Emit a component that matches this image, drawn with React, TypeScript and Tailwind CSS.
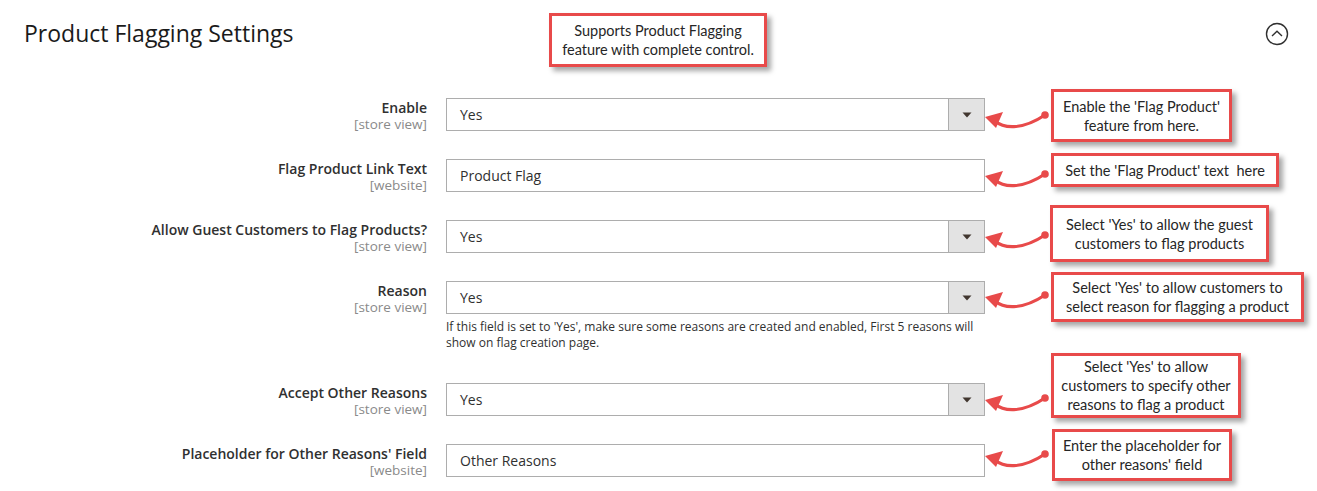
import React from "react";

type Row = {
  label: string;
  scope: string;
  value: string;
  select: boolean;
  note?: string[];
};

const rows: Row[] = [
  { label: "Enable", scope: "[store view]", value: "Yes", select: true },
  { label: "Flag Product Link Text", scope: "[website]", value: "Product Flag", select: false },
  { label: "Allow Guest Customers to Flag Products?", scope: "[store view]", value: "Yes", select: true },
  {
    label: "Reason",
    scope: "[store view]",
    value: "Yes",
    select: true,
    note: [
      "If this field is set to 'Yes', make sure some reasons are created and enabled, First 5 reasons will",
      "show on flag creation page.",
    ],
  },
  { label: "Accept Other Reasons", scope: "[store view]", value: "Yes", select: true },
  { label: "Placeholder for Other Reasons' Field", scope: "[website]", value: "Other Reasons", select: false },
];

type Callout = { left: number; top: number; w: number; h: number; lines: string[] };

const callouts: Callout[] = [
  { left: 549, top: 13, w: 218, h: 54, lines: ["Supports Product Flagging", "feature with complete control."] },
  { left: 1051, top: 89, w: 181, h: 53, lines: ["Enable the 'Flag Product'", "feature from here."] },
  { left: 1051, top: 153, w: 228, h: 34, lines: ["Set the 'Flag Product' text  here"] },
  { left: 1050, top: 205, w: 219, h: 57, lines: ["Select 'Yes' to allow the guest", "customers to flag products"] },
  { left: 1051, top: 272, w: 253, h: 50, lines: ["Select 'Yes' to allow customers to", "select reason for flagging a product"] },
  { left: 1051, top: 353, w: 190, h: 65, lines: ["Select 'Yes' to allow", "customers to specify other", "reasons to flag a product"] },
  { left: 1052, top: 429, w: 180, h: 52, lines: ["Enter the placeholder for", "other reasons' field"] },
];

// tip y positions of arrows (absolute)
const arrowTips = [117, 176, 237, 297, 400, 456];

function Arrow({ tipY }: { tipY: number }) {
  return (
    <svg
      className="absolute"
      style={{ left: 983, top: tipY - 8 }}
      width="70"
      height="26"
      viewBox="0 0 70 26"
    >
      <path
        d="M12 12 C 20 19, 38 22, 62 6"
        fill="none"
        stroke="#e84a4a"
        strokeWidth="3.2"
        strokeLinecap="round"
      />
      <polygon points="2,8 20,3 13,19" fill="#e84a4a" />
      <circle cx="62" cy="6" r="3.8" fill="#e84a4a" />
    </svg>
  );
}

export default function App() {
  return (
    <div className="relative w-[1317px] h-[491px] bg-white overflow-hidden" style={{ fontFamily: "'Open Sans', sans-serif" }}>
      {/* Header */}
      <div className="flex items-center justify-between pl-[24px] pr-[28px] pt-[17px] h-[48px]">
        <h1 className="text-[23px] leading-[30px] text-[#1a1a1a]">Product Flagging Settings</h1>
        <svg width="24" height="24" viewBox="0 0 24 24" className="mt-[2px]">
          <circle cx="12" cy="12" r="10.5" fill="none" stroke="#303030" strokeWidth="1.4" />
          <path d="M7 14 L12 9.3 L17 14" fill="none" stroke="#303030" strokeWidth="1.4" />
        </svg>
      </div>

      {/* Form rows */}
      <div className="flex flex-col gap-[28px] pt-[50px]">
        {rows.map((r, i) => (
          <div key={i} className="flex flex-col">
            <div className="flex items-start h-[33px]">
              <div className="w-[427px] text-right pt-[2px]">
                <div className="text-[14px] leading-[16px] font-semibold text-[#303030]">{r.label}</div>
                <div className="text-[13.5px] leading-[16px] text-[#8a8a8a]">{r.scope}</div>
              </div>
              <div className="ml-[19px] w-[539px] h-[33px] border border-[#adadad] flex items-stretch bg-white">
                <div className="flex-1 flex items-center pl-[13px] text-[14px] text-[#303030]">{r.value}</div>
                {r.select && (
                  <div className="w-[36px] bg-[#e3e3e3] border-l border-[#adadad] flex items-center justify-center">
                    <svg width="10" height="6" viewBox="0 0 10 6">
                      <polygon points="0.5,0.5 9.5,0.5 5,5.5" fill="#41362f" />
                    </svg>
                  </div>
                )}
              </div>
            </div>
            {r.note && (
              <div className="ml-[446px] mt-[5px] mb-[4px] text-[12px] leading-[16px] text-[#303030]">
                {r.note.map((l, j) => (
                  <div key={j}>{l}</div>
                ))}
              </div>
            )}
          </div>
        ))}
      </div>

      {/* Annotations */}
      {arrowTips.map((y, i) => (
        <Arrow key={i} tipY={y} />
      ))}
      {callouts.map((c, i) => (
        <div
          key={i}
          className="absolute border-[3px] border-[#e84a4a] bg-white flex flex-col items-center justify-center text-center text-[14.5px] leading-[19px] text-[#262626] shadow-[4px_4px_5px_rgba(0,0,0,0.35)] whitespace-pre"
          style={{ left: c.left, top: c.top, width: c.w, height: c.h, fontFamily: "Lato, 'Liberation Sans', sans-serif" }}
        >
          {c.lines.map((l, j) => (
            <div key={j}>{l}</div>
          ))}
        </div>
      ))}
    </div>
  );
}
